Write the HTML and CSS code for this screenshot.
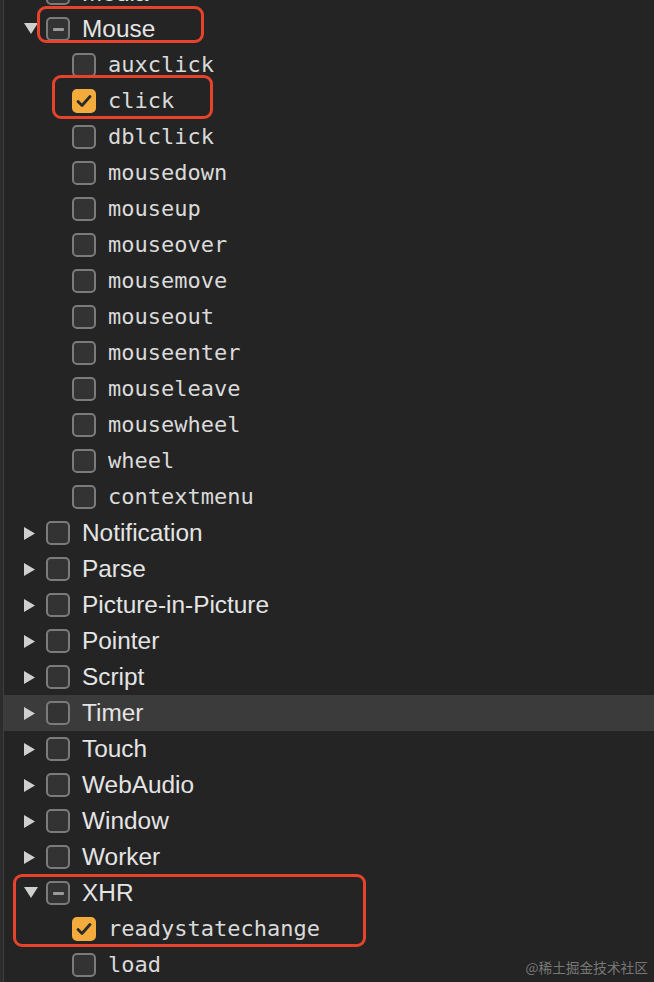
FILE: index.html
```html
<!DOCTYPE html>
<html>
<head>
<meta charset="utf-8">
<link rel="stylesheet" href="styles.css">
</head>
<body>
<div class="panel">
  <ul class="tree">
    <li class="row top"><span class="arrow"></span><span class="box"></span><span class="label">Media</span></li>
    <li class="row top">
      <span class="arrow"><svg width="14" height="12" viewBox="0 0 14 12"><path d="M0 0 H14 L7 11 Z" fill="#cfcfcf"/></svg></span><span class="box mixed"><i></i></span><span class="label">Mouse</span>
      <span class="mark mark-mouse"></span>
    </li>
    <li class="row child"><span class="box"></span><span class="code">auxclick</span></li>
    <li class="row child"><span class="box checked"><svg width="16" height="14" viewBox="0 0 16 14"><path d="M2 7.5 L6 11.5 L14 2.5" fill="none" stroke="#2b2b2b" stroke-width="2.8" stroke-linecap="round" stroke-linejoin="round"/></svg></span><span class="code">click</span>
      <span class="mark mark-click"></span>
    </li>
    <li class="row child"><span class="box"></span><span class="code">dblclick</span></li>
    <li class="row child"><span class="box"></span><span class="code">mousedown</span></li>
    <li class="row child"><span class="box"></span><span class="code">mouseup</span></li>
    <li class="row child"><span class="box"></span><span class="code">mouseover</span></li>
    <li class="row child"><span class="box"></span><span class="code">mousemove</span></li>
    <li class="row child"><span class="box"></span><span class="code">mouseout</span></li>
    <li class="row child"><span class="box"></span><span class="code">mouseenter</span></li>
    <li class="row child"><span class="box"></span><span class="code">mouseleave</span></li>
    <li class="row child"><span class="box"></span><span class="code">mousewheel</span></li>
    <li class="row child"><span class="box"></span><span class="code">wheel</span></li>
    <li class="row child"><span class="box"></span><span class="code">contextmenu</span></li>
    <li class="row top"><span class="arrow"><svg width="11" height="13" viewBox="0 0 11 13"><path d="M0 0 V13 L11 6.5 Z" fill="#cfcfcf"/></svg></span><span class="box"></span><span class="label">Notification</span></li>
    <li class="row top"><span class="arrow"><svg width="11" height="13" viewBox="0 0 11 13"><path d="M0 0 V13 L11 6.5 Z" fill="#cfcfcf"/></svg></span><span class="box"></span><span class="label">Parse</span></li>
    <li class="row top"><span class="arrow"><svg width="11" height="13" viewBox="0 0 11 13"><path d="M0 0 V13 L11 6.5 Z" fill="#cfcfcf"/></svg></span><span class="box"></span><span class="label">Picture-in-Picture</span></li>
    <li class="row top"><span class="arrow"><svg width="11" height="13" viewBox="0 0 11 13"><path d="M0 0 V13 L11 6.5 Z" fill="#cfcfcf"/></svg></span><span class="box"></span><span class="label">Pointer</span></li>
    <li class="row top"><span class="arrow"><svg width="11" height="13" viewBox="0 0 11 13"><path d="M0 0 V13 L11 6.5 Z" fill="#cfcfcf"/></svg></span><span class="box"></span><span class="label">Script</span></li>
    <li class="row top hover"><span class="arrow"><svg width="11" height="13" viewBox="0 0 11 13"><path d="M0 0 V13 L11 6.5 Z" fill="#cfcfcf"/></svg></span><span class="box"></span><span class="label">Timer</span></li>
    <li class="row top"><span class="arrow"><svg width="11" height="13" viewBox="0 0 11 13"><path d="M0 0 V13 L11 6.5 Z" fill="#cfcfcf"/></svg></span><span class="box"></span><span class="label">Touch</span></li>
    <li class="row top"><span class="arrow"><svg width="11" height="13" viewBox="0 0 11 13"><path d="M0 0 V13 L11 6.5 Z" fill="#cfcfcf"/></svg></span><span class="box"></span><span class="label">WebAudio</span></li>
    <li class="row top"><span class="arrow"><svg width="11" height="13" viewBox="0 0 11 13"><path d="M0 0 V13 L11 6.5 Z" fill="#cfcfcf"/></svg></span><span class="box"></span><span class="label">Window</span></li>
    <li class="row top"><span class="arrow"><svg width="11" height="13" viewBox="0 0 11 13"><path d="M0 0 V13 L11 6.5 Z" fill="#cfcfcf"/></svg></span><span class="box"></span><span class="label">Worker</span></li>
    <li class="row top">
      <span class="arrow"><svg width="14" height="12" viewBox="0 0 14 12"><path d="M0 0 H14 L7 11 Z" fill="#cfcfcf"/></svg></span><span class="box mixed"><i></i></span><span class="label">XHR</span>
      <span class="mark mark-xhr"></span>
    </li>
    <li class="row child"><span class="box checked"><svg width="16" height="14" viewBox="0 0 16 14"><path d="M2 7.5 L6 11.5 L14 2.5" fill="none" stroke="#2b2b2b" stroke-width="2.8" stroke-linecap="round" stroke-linejoin="round"/></svg></span><span class="code">readystatechange</span></li>
    <li class="row child"><span class="box"></span><span class="code">load</span></li>
  </ul>
  <div class="watermark">@稀土掘金技术社区</div>
</div>
</body>
</html>
```
FILE: styles.css
```css
html, body {
  margin: 0;
  padding: 0;
  background: #242424;
  height: 100%;
  overflow: hidden;
}
.panel {
  position: relative;
  height: 982px;
  overflow: hidden;
  background: #242424;
  border-left: 3px solid #2c2c2c;
  box-shadow: inset 1px 0 0 #3e3e3e;
}
.tree {
  list-style: none;
  margin: -25px 0 0 0;
  padding: 0;
}
.row {
  position: relative;
  display: flex;
  align-items: center;
  height: 36px;
}
.row.top { padding-left: 21px; }
.row.child { padding-left: 69px; }
.row.hover { background: #3b3b3b; margin-left: 1px; padding-left: 20px; }
.arrow {
  width: 22px;
  height: 36px;
  display: flex;
  align-items: center;
  justify-content: flex-start;
}
.box {
  box-sizing: border-box;
  width: 24px;
  height: 24px;
  border: 2px solid #7b7b7b;
  border-radius: 5px;
  background: #333333;
  margin-right: 12px;
  display: flex;
  align-items: center;
  justify-content: center;
  flex: none;
}
.box.mixed i {
  display: block;
  width: 11px;
  height: 3px;
  background: #9a9a9a;
  border-radius: 1px;
}
.box.checked {
  background: #f3ac3c;
  border-color: #f3ac3c;
}
.label {
  font-family: "Liberation Sans", Arial, sans-serif;
  font-size: 24.4px;
  color: #e4e4e4;
  line-height: 36px;
}
.code {
  font-family: "DejaVu Sans Mono", monospace;
  font-size: 22px;
  color: #dadada;
  line-height: 36px;
}
.mark {
  position: absolute;
  box-sizing: border-box;
  border: 3.5px solid #e5432b;
  border-radius: 9px;
  pointer-events: none;
}
.mark-mouse { left: 34px; top: -5px; width: 167px; height: 37px; }
.mark-click { left: 49px; top: -8px; width: 161px; height: 44px; }
.mark-xhr { left: 10px; top: -1px; width: 353px; height: 73px; }
.watermark {
  position: absolute;
  right: 6px;
  bottom: 5px;
  font-family: "Noto Sans CJK SC", sans-serif;
  font-size: 13.7px;
  color: #777777;
}
```
